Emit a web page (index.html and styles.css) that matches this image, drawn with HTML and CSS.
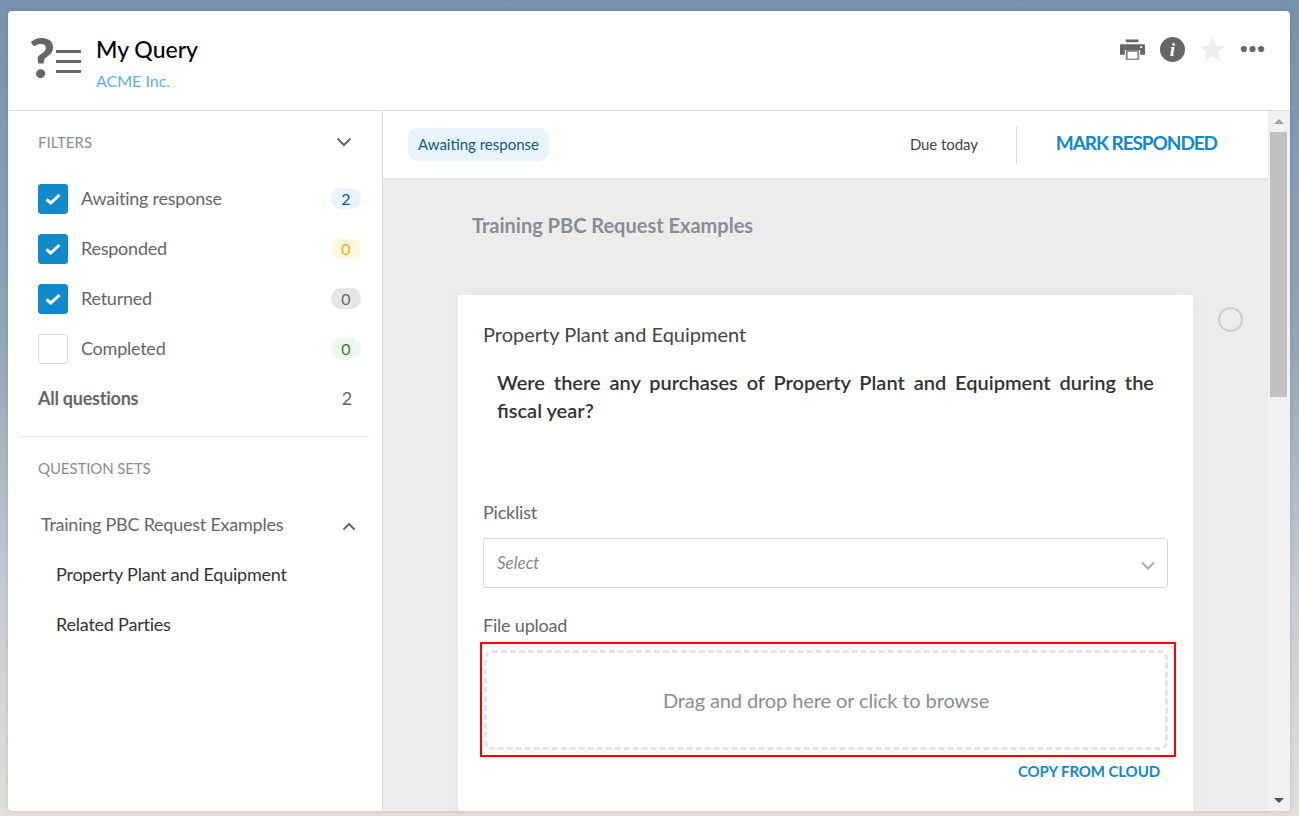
FILE: index.html
```html
<!DOCTYPE html>
<html lang="en">
<head>
    <meta charset="UTF-8">
    <title>My Query</title>
    <link rel="stylesheet" href="styles.css">
</head>
<body>
    <div class="window">
        <header class="topbar">
            <div class="logo">
                <span class="logo-mark">?</span>
                <svg width="25" height="36" viewBox="0 0 25 36">
                    <rect y="13" width="25" height="3" />
                    <rect y="23" width="25" height="3" />
                    <rect y="33" width="25" height="3" />
                </svg>
            </div>
            <div class="titles">
                <h1>My Query</h1>
                <a class="client">ACME Inc.</a>
            </div>
            <div class="actions">
                <svg width="25" height="22" viewBox="0 0 26 22">
                    <path fill="#666" d="M6 1h13v3H6zM1 6h24a1 1 0 0 1 1 1v10h-5v-5H5v5H0V7a1 1 0 0 1 1-1z" />
                    <rect x="7" y="13" width="12" height="9" fill="#fff" stroke="#888" stroke-width="2" />
                    <circle cx="22" cy="9" r="1.2" fill="#fff" />
                </svg>
                <span class="info">i</span>
                <svg width="25" height="24" viewBox="0 0 26 25">
                    <path fill="#eee" d="M13 0l3.6 8.9 9.4.7-7.2 6.1 2.3 9.3-8.1-5-8.1 5 2.3-9.3L0 9.600l9.400-.7z" />
                </svg>
                <svg width="25" height="8" viewBox="0 0 26 8">
                    <circle cx="4" cy="4" r="3.2" fill="#666" />
                    <circle cx="13" cy="4" r="3.2" fill="#666" />
                    <circle cx="22" cy="4" r="3.2" fill="#666" />
                </svg>
            </div>
        </header>

        <div class="content">
            <aside class="sidebar">
                <div class="side-head">
                    <span>FILTERS</span>
                    <svg width="16" height="10" viewBox="0 0 16 10"><path class="chev" d="M1.500 1.500L8 8l6.500-6.500" /></svg>
                </div>
                <ul class="filters">
                    <li>
                        <span class="check on"><svg width="16" height="12" viewBox="0 0 16 12"><path d="M1.500 6.500L5.700 10 14.500 2" /></svg></span>
                        <span class="name">Awaiting response</span>
                        <span class="count blue">2</span>
                    </li>
                    <li>
                        <span class="check on"><svg width="16" height="12" viewBox="0 0 16 12"><path d="M1.500 6.500L5.700 10 14.500 2" /></svg></span>
                        <span class="name">Responded</span>
                        <span class="count yellow">0</span>
                    </li>
                    <li>
                        <span class="check on"><svg width="16" height="12" viewBox="0 0 16 12"><path d="M1.500 6.500L5.700 10 14.500 2" /></svg></span>
                        <span class="name">Returned</span>
                        <span class="count grey">0</span>
                    </li>
                    <li>
                        <span class="check"></span>
                        <span class="name">Completed</span>
                        <span class="count green">0</span>
                    </li>
                    <li class="all">
                        <span class="name">All questions</span>
                        <span class="total">2</span>
                    </li>
                </ul>
                <div class="side-sets">
                    <div class="sets-title">QUESTION SETS</div>
                    <div class="set-head">
                        <span>Training PBC Request Examples</span>
                        <svg width="14" height="9" viewBox="0 0 14 9"><path class="chev" d="M1.500 7.500L7 2l5.500 5.500" /></svg>
                    </div>
                    <div class="set-item">Property Plant and Equipment</div>
                    <div class="set-item">Related Parties</div>
                </div>
            </aside>

            <main class="main">
                <div class="status-bar">
                    <span class="pill">Awaiting response</span>
                    <span class="due">Due today</span>
                    <a class="mark">MARK RESPONDED</a>
                </div>
                <div class="pane">
                    <h2>Training PBC Request Examples</h2>
                    <div class="card-row">
                        <section class="card">
                            <h3>Property Plant and Equipment</h3>
                            <p class="question">Were there any purchases of Property Plant and Equipment during the fiscal year?</p>
                            <label class="field-label">Picklist</label>
                            <div class="select">
                                <span>Select</span>
                                <svg width="14" height="9" viewBox="0 0 14 9"><path d="M1 1.500L7 7.500l6-6" /></svg>
                            </div>
                            <label class="field-label upload-label">File upload</label>
                            <div class="highlight">
                                <div class="dropzone">Drag and drop here or click to browse</div>
                            </div>
                            <a class="cloud">COPY FROM CLOUD</a>
                        </section>
                        <span class="radio"></span>
                    </div>
                </div>
            </main>

            <div class="scrollbar">
                <span class="arrow up"></span>
                <div class="track"><div class="thumb"></div></div>
                <span class="arrow down"></span>
            </div>
        </div>
    </div>
</body>
</html>
```

FILE: styles.css
```css
* {
    box-sizing: border-box;
}

html, body {
    height: 100%;
}

body {
    margin: 0;
    padding: 11px 9px 5px 8px;
    overflow: hidden;
    font-family: Lato, "Open Sans", sans-serif;
    color: #666;
    background: linear-gradient(to bottom, #7792ad 0%, #8fa4b8 40%, #c9ced3 75%, #e3dfd8 100%);
}

.window {
    height: 100%;
    display: flex;
    flex-direction: column;
    background: #fff;
    border-radius: 4px;
    overflow: hidden;
    box-shadow: 0 0 4px rgba(0, 0, 0, 0.15);
}

.topbar {
    height: 100px;
    flex: none;
    display: flex;
    align-items: flex-start;
    border-bottom: 1px solid #ddd;
    padding: 26px 25px 0 21px;
}

.logo {
    flex: none;
    display: flex;
    align-items: flex-start;
    width: 54px;
    margin-right: 13px;
}

.logo rect {
    fill: #666;
}

.logo-mark {
    width: 27px;
    margin-top: -3px;
    font-size: 56px;
    line-height: 46px;
    font-weight: 900;
    color: #666;
}

.titles {
    flex: 1;
}

h1 {
    margin: -1px 0 0;
    font-size: 23px;
    line-height: 26px;
    font-weight: 500;
    color: #000;
}

.client {
    display: block;
    margin-top: 10px;
    font-size: 16px;
    line-height: 18px;
    color: #5aaeef;
}

.actions {
    display: flex;
    align-items: center;
    gap: 15px;
    height: 26px;
    margin-top: -1px;
}

.info {
    width: 25px;
    height: 25px;
    border-radius: 50%;
    background: #666;
    color: #fff;
    font-family: "Liberation Serif", serif;
    font-style: italic;
    font-weight: bold;
    font-size: 19px;
    line-height: 25px;
    text-align: center;
}

.content {
    flex: 1;
    min-height: 0;
    display: flex;
}

.sidebar {
    width: 375px;
    flex: none;
    border-right: 1px solid #ddd;
    padding: 0 13px;
}

.side-head {
    display: flex;
    justify-content: space-between;
    align-items: center;
    height: 63px;
    padding: 0 17px 2px;
    font-size: 15px;
    color: #868e96;
}

.chev {
    fill: none;
    stroke: #666;
    stroke-width: 2;
}

.filters {
    list-style: none;
    margin: 0;
    padding: 0 8px 0 17px;
}

.filters li {
    height: 50px;
    display: flex;
    align-items: center;
}

.check {
    width: 30px;
    height: 30px;
    margin-right: 13px;
    border: 1px solid #d6dbe0;
    border-radius: 3px;
    display: flex;
    align-items: center;
    justify-content: center;
}

.check.on {
    background: #118acb;
    border-color: #118acb;
}

.check path {
    fill: none;
    stroke: #fff;
    stroke-width: 3;
}

.name {
    flex: 1;
    padding-bottom: 2px;
    font-size: 18px;
    letter-spacing: -0.24px;
    color: #666;
}

.count {
    width: 30px;
    height: 21px;
    margin-top: -1px;
    border-radius: 10px;
    font-size: 16px;
    line-height: 21px;
    text-align: center;
}

.blue { background: #e8f3fb; color: #0e5c86; }
.yellow { background: #fff8dc; color: #f5a623; }
.grey { background: #e6e6e6; color: #666; }
.green { background: #ecf7ee; color: #3d7a3d; }

.all .name {
    font-weight: bold;
}

.total {
    width: 28px;
    padding-bottom: 2px;
    font-size: 18px;
    text-align: center;
}

.side-sets {
    margin-top: 12px;
    border-top: 1px solid #e1e4e8;
    padding: 0 17px;
}

.sets-title {
    height: 64px;
    line-height: 62px;
    font-size: 15px;
    letter-spacing: -0.1px;
    color: #868e96;
}

.set-head {
    display: flex;
    justify-content: space-between;
    align-items: center;
    height: 50px;
    padding-left: 3px;
    margin-right: -4px;
    font-size: 18px;
    letter-spacing: -0.24px;
    color: #666;
}

.set-head span {
    padding-bottom: 4px;
}

.set-item {
    height: 50px;
    line-height: 46px;
    padding-left: 18px;
    font-size: 18px;
    letter-spacing: -0.22px;
    color: #333;
}

.main {
    flex: 1;
    min-width: 0;
    display: flex;
    flex-direction: column;
}

.status-bar {
    height: 67px;
    flex: none;
    display: flex;
    align-items: center;
    background: #fff;
    padding: 0 51px 0 25px;
    box-shadow: 0 1px 4px rgba(0, 0, 0, 0.06);
    position: relative;
}

.pill {
    background: #e8f3fb;
    color: #0e5c86;
    font-size: 15px;
    line-height: 33px;
    padding: 0 10px;
    border-radius: 10px;
}

.due {
    margin-left: auto;
    padding-right: 38px;
    height: 38px;
    line-height: 36px;
    font-size: 15px;
    letter-spacing: -0.08px;
    color: #444;
    border-right: 1px solid #ddd;
}

.mark {
    margin-left: 39px;
    margin-bottom: 4px;
    font-size: 19px;
    letter-spacing: -1.07px;
    font-weight: bold;
    color: #118acb;
}

.pane {
    flex: 1;
    min-height: 0;
    overflow: hidden;
    background: #ececec;
    padding: 0 0 0 75px;
}

h2 {
    margin: 0;
    padding: 34px 0 0 14px;
    font-size: 20px;
    line-height: 26px;
    font-weight: bold;
    color: #868e96;
}

.card-row {
    display: flex;
    align-items: flex-start;
    margin-top: 57px;
}

.card {
    width: 735px;
    height: 600px;
    flex: none;
    background: #fff;
    border-radius: 3px;
    padding: 26px 25px 0;
    box-shadow: 0 0 20px rgba(0, 0, 0, 0.03);
}

h3 {
    margin: 0;
    font-size: 20px;
    line-height: 26px;
    font-weight: 400;
    color: #444;
}

.question {
    margin: 21px 14px 0 14px;
    font-size: 20px;
    line-height: 28px;
    font-weight: 600;
    text-align: justify;
    color: #333;
}

.field-label {
    display: block;
    margin-top: 78px;
    font-size: 18px;
    letter-spacing: -0.2px;
    line-height: 20px;
    color: #666;
}

.select {
    margin-top: 16px;
    height: 50px;
    border: 1px solid #d3d8de;
    border-radius: 3px;
    display: flex;
    justify-content: space-between;
    align-items: center;
    padding: 0 12px 0 13px;
    font-size: 17px;
    font-style: italic;
    color: #888;
}

.select span {
    padding-bottom: 2px;
}

.select svg {
    margin-top: 5px;
}

.select path {
    fill: none;
    stroke: #aaa;
    stroke-width: 2;
}

.upload-label {
    margin-top: 27px;
}

.highlight {
    margin: 7px -8px 0 -3px;
    height: 115px;
    border: 2px solid #f00;
    padding: 6px 6px 5px 2px;
}

.dropzone {
    height: 100%;
    border: 3px dashed #e4e4e4;
    border-radius: 8px;
    display: flex;
    align-items: center;
    justify-content: center;
    font-size: 20px;
    letter-spacing: -0.1px;
    color: #868e96;
}

.cloud {
    display: block;
    margin-top: 4px;
    padding-right: 8px;
    text-align: right;
    font-size: 15px;
    letter-spacing: -0.1px;
    line-height: 20px;
    font-weight: bold;
    color: #118acb;
}

.radio {
    width: 25px;
    height: 25px;
    margin: 12px 0 0 25px;
    border: 2px solid #ccc;
    border-radius: 50%;
    flex: none;
}

.scrollbar {
    width: 22px;
    flex: none;
    background: #f1f1f1;
    display: flex;
    flex-direction: column;
    align-items: center;
}

.track {
    flex: 1;
    width: 100%;
    padding: 0 3px 0 2px;
}

.thumb {
    height: 265px;
    background: #c1c1c1;
}

.arrow {
    flex: none;
    width: 0;
    height: 0;
    border-left: 5px solid transparent;
    border-right: 5px solid transparent;
}

.arrow.up {
    margin: 8px 0 8px;
    border-bottom: 5px solid #a3a3a3;
}

.arrow.down {
    margin: 7px 0 8px;
    border-top: 5px solid #505050;
}
```
